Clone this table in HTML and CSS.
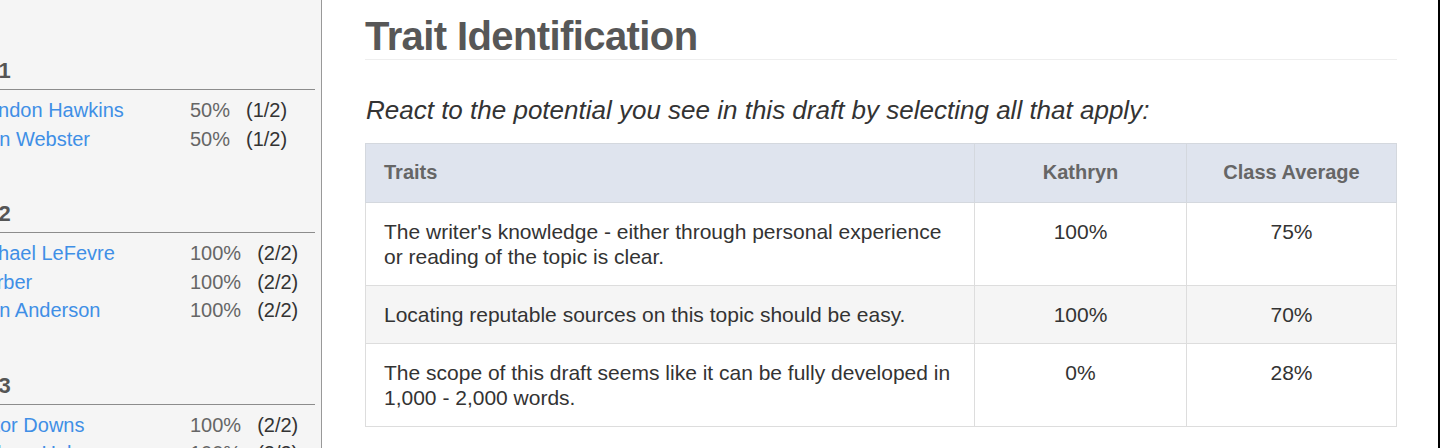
FILE: index.html
```html
<!DOCTYPE html>
<html lang="en">
<head>
<meta charset="utf-8">
<title>Trait Identification</title>
<link rel="stylesheet" href="styles.css">
</head>
<body>
<div class="page">
  <aside class="sidebar">
    <div class="side-inner">
      <section class="group">
        <h4 class="group-title">Draft 1</h4>
        <ul class="student-list">
          <li class="student"><a class="student-name" href="#">Brandon Hawkins</a><span class="pct">50%</span><span class="count">(1/2)</span></li>
          <li class="student"><a class="student-name" href="#">John Webster</a><span class="pct">50%</span><span class="count">(1/2)</span></li>
        </ul>
      </section>
      <section class="group">
        <h4 class="group-title">Draft 2</h4>
        <ul class="student-list">
          <li class="student"><a class="student-name" href="#">Michael LeFevre</a><span class="pct">100%</span><span class="count">(2/2)</span></li>
          <li class="student"><a class="student-name" href="#">Werber</a><span class="pct">100%</span><span class="count">(2/2)</span></li>
          <li class="student"><a class="student-name" href="#">John Anderson</a><span class="pct">100%</span><span class="count">(2/2)</span></li>
        </ul>
      </section>
      <section class="group">
        <h4 class="group-title">Draft 3</h4>
        <ul class="student-list">
          <li class="student"><a class="student-name" href="#">Victor Downs</a><span class="pct">100%</span><span class="count">(2/2)</span></li>
          <li class="student"><a class="student-name" href="#">Kathryn Hale</a><span class="pct">100%</span><span class="count">(2/2)</span></li>
        </ul>
      </section>
    </div>
  </aside>
  <main class="main">
    <h1 class="title">Trait Identification</h1>
    <p class="prompt">React to the potential you see in this draft by selecting all that apply:</p>
    <table class="traits">
      <colgroup>
        <col class="col-trait">
        <col class="col-student">
        <col class="col-avg">
      </colgroup>
      <thead>
        <tr><th class="th-left">Traits</th><th>Kathryn</th><th>Class Average</th></tr>
      </thead>
      <tbody>
        <tr><td class="td-left">The writer's knowledge - either through personal experience or reading of the topic is clear.</td><td>100%</td><td>75%</td></tr>
        <tr class="striped"><td class="td-left">Locating reputable sources on this topic should be easy.</td><td>100%</td><td>70%</td></tr>
        <tr><td class="td-left">The scope of this draft seems like it can be fully developed in 1,000 - 2,000 words.</td><td>0%</td><td>28%</td></tr>
      </tbody>
    </table>
  </main>
</div>
</body>
</html>
```
FILE: styles.css
```css
html, body {
  margin: 0;
  padding: 0;
  background: #ffffff;
}
body {
  font-family: "Liberation Sans", Arial, Helvetica, sans-serif;
  color: #333333;
  overflow: hidden;
}
.page {
  display: flex;
  height: 448px;
  border-right: 2px solid #000000;
  overflow: hidden;
}
.sidebar {
  width: 321px;
  flex: none;
  background: #f5f5f5;
  border-right: 1px solid #999999;
  overflow: hidden;
  padding-top: 10px;
  box-sizing: content-box;
}
.side-inner {
  margin-left: -33px;
  width: 348px;
}
.group {
  margin-top: 46px;
}
.group-title {
  margin: 0 0 0 -26px;
  font-size: 22px;
  font-weight: bold;
  line-height: 29px;
  color: #555555;
  padding-bottom: 4px;
  border-bottom: 1px solid #8c8c8c;
}
.student-list {
  list-style: none;
  margin: 0;
  padding: 6px 0 0 0;
}
.student {
  display: flex;
  font-size: 20px;
  line-height: 28.57px;
  white-space: nowrap;
}
.student-name {
  width: 223px;
  flex: none;
  color: #3f8fe6;
  text-decoration: none;
  overflow: hidden;
}
.pct {
  color: #666666;
}
.count {
  margin-left: 16px;
  color: #333333;
}
.main {
  flex: 1;
  padding: 0 42px 0 43px;
}
.title {
  margin: 14px 0 0 0;
  font-size: 40px;
  letter-spacing: -0.6px;
  line-height: 44px;
  font-weight: bold;
  color: #575757;
  padding-bottom: 1px;
  border-bottom: 1px solid #eeeeee;
}
.prompt {
  margin: 35px 0 0 1px;
  font-size: 26px;
  line-height: 30px;
  font-style: italic;
  color: #333333;
}
.traits {
  margin-top: 18px;
  width: 1031px;
  border-collapse: collapse;
  table-layout: fixed;
  font-size: 21px;
  line-height: 25px;
}
.col-trait { width: 609px; }
.col-student { width: 212px; }
.col-avg { width: 210px; }
.traits th,
.traits td {
  border: 1px solid #dddddd;
  padding: 16px 18px;
  vertical-align: top;
  text-align: center;
}
.traits th {
  background: #dfe4ee;
  color: #666666;
  font-weight: bold;
  font-size: 20px;
  padding-bottom: 17px;
  border-color: #d4d8de;
}
.traits .th-left,
.traits .td-left {
  text-align: left;
}
.traits td {
  color: #333333;
}
.striped td {
  background: #f5f5f5;
}
```
